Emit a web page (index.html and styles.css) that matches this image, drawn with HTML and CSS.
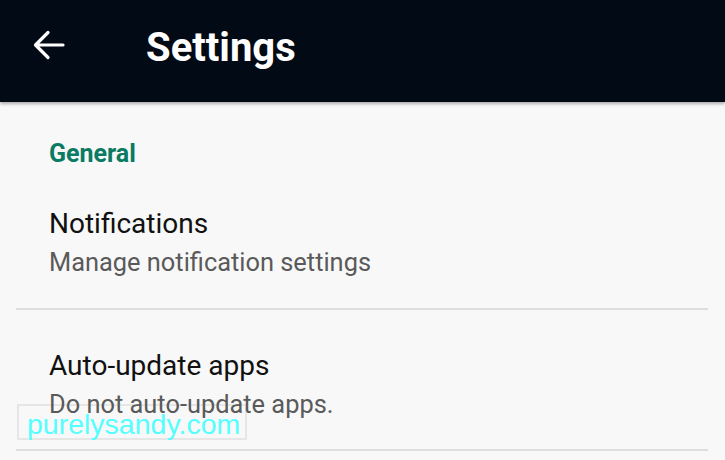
FILE: index.html
```html
<!DOCTYPE html>
<html>
<head>
<meta charset="utf-8">
<link rel="stylesheet" href="styles.css">
</head>
<body>
<header class="appbar">
  <svg class="back" width="34" height="34" viewBox="0 0 34 34" aria-hidden="true">
    <path d="M31 17H4M16 4.5L3.5 17 16 29.5" fill="none" stroke="#fff" stroke-width="3.2" stroke-linecap="round" stroke-linejoin="round"/>
  </svg>
  <h1 class="title">Settings</h1>
</header>
<main class="content">
  <div class="category">General</div>
  <div class="pref">
    <div class="pref-title">Notifications</div>
    <div class="pref-summary">Manage notification settings</div>
  </div>
  <div class="pref">
    <div class="pref-title">Auto-update apps</div>
    <div class="pref-summary">Do not auto-update apps.</div>
  </div>
</main>
<div class="watermark">purelysandy.com</div>
</body>
</html>
```
FILE: styles.css
```css
html, body {
  margin: 0;
  padding: 0;
}
body {
  width: 725px;
  height: 460px;
  overflow: hidden;
  background: #f8f8f8;
  font-family: Roboto, "Noto Sans", sans-serif;
  position: relative;
}
.appbar {
  height: 102px;
  box-sizing: border-box;
  padding-top: 26px;
  background: #020a15;
  display: flex;
  align-items: flex-start;
  box-shadow: 0 2px 3px rgba(0,0,0,0.3);
  position: relative;
  z-index: 2;
}
.back {
  margin-left: 32px;
  margin-top: 2px;
  flex: none;
}
.title {
  margin: 0 0 0 80px;
  color: #fff;
  font-size: 40px;
  font-weight: 700;
  line-height: 44px;
}
.content {
  padding: 37px 17px 0 16px;
  position: relative;
  z-index: 1;
}
.category {
  padding-left: 33px;
  color: #0a7a62;
  font-size: 25px;
  font-weight: 700;
  line-height: 30px;
  margin-bottom: 1px;
}
.pref {
  padding: 38px 0 32px 33px;
  border-bottom: 2px solid #dedede;
}
.pref + .pref {
  padding-top: 40px;
  padding-bottom: 31px;
}
.pref-title {
  color: #111;
  font-size: 28px;
  line-height: 32px;
  margin-bottom: 8px;
}
.pref-summary {
  color: #5a5a5a;
  font-size: 25.4px;
  line-height: 28px;
}
.watermark {
  position: absolute;
  z-index: 0;
  left: 17px;
  top: 404px;
  width: 218px;
  height: 32px;
  border: 2px solid #e6e6e6;
  color: #55ffff;
  font-family: "Liberation Sans", Arial, sans-serif;
  font-size: 28.5px;
  line-height: 36px;
  padding-left: 8px;
  box-sizing: content-box;
}
```
